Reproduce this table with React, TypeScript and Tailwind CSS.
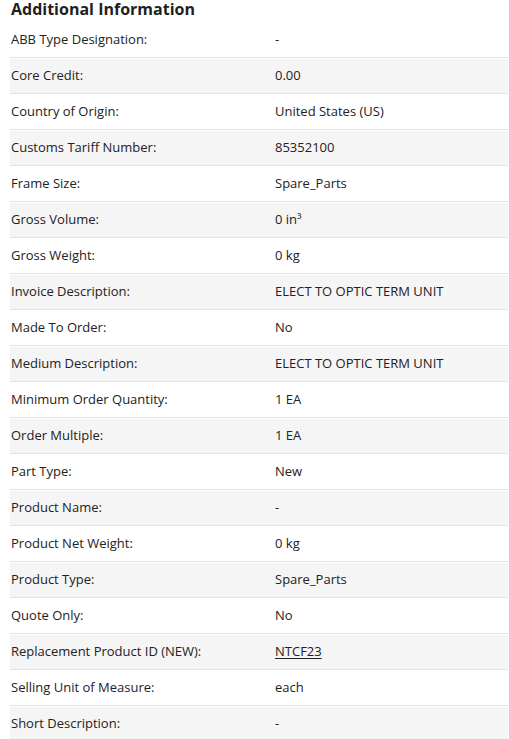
import React from "react";

const rows: [string, React.ReactNode][] = [
  ["ABB Type Designation:", "-"],
  ["Core Credit:", "0.00"],
  ["Country of Origin:", "United States (US)"],
  ["Customs Tariff Number:", "85352100"],
  ["Frame Size:", "Spare_Parts"],
  ["Gross Volume:", "0 in³"],
  ["Gross Weight:", "0 kg"],
  ["Invoice Description:", "ELECT TO OPTIC TERM UNIT"],
  ["Made To Order:", "No"],
  ["Medium Description:", "ELECT TO OPTIC TERM UNIT"],
  ["Minimum Order Quantity:", "1 EA"],
  ["Order Multiple:", "1 EA"],
  ["Part Type:", "New"],
  ["Product Name:", "-"],
  ["Product Net Weight:", "0 kg"],
  ["Product Type:", "Spare_Parts"],
  ["Quote Only:", "No"],
  ["Replacement Product ID (NEW):", <span className="underline underline-offset-2">NTCF23</span>],
  ["Selling Unit of Measure:", "each"],
  ["Short Description:", "-"],
];

export default function App() {
  return (
    <div className="w-[509px] h-[739px] overflow-hidden bg-white text-[#222222]" style={{ fontFamily: '"Open Sans", sans-serif' }}>
      <h2 className="h-[22px] pl-[11px] text-[16px] font-bold leading-[18px] text-[#1f1f1f]">Additional Information</h2>
      <div className="ml-[10px] w-[498px]">
        {rows.map(([label, value], i) => (
          <div key={i} className="h-[36px] border-b border-[#e2e2e2] py-px">
            <div className={`flex h-[34px] items-center text-[13px] ${i % 2 === 1 ? "bg-[#f5f5f5]" : "bg-white"}`}>
              <div className="w-[265px] pl-px">{label}</div>
              <div>{value}</div>
            </div>
          </div>
        ))}
      </div>
    </div>
  );
}
